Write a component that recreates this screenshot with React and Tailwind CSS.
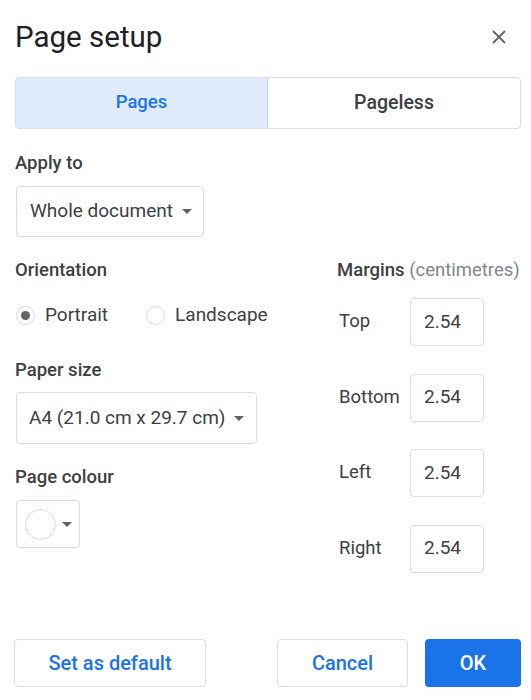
import React from "react";

const font = { fontFamily: "Roboto, 'Noto Sans', sans-serif" };

function Caret() {
	return (
		<svg width="10" height="5" viewBox="0 0 10 5" className="shrink-0">
			<path d="M0 0 L10 0 L5 5 Z" fill="#5f6368" />
		</svg>
	);
}

function Label({ children, className = "" }) {
	return (
		<div className={`text-[18.5px] leading-[20px] font-medium text-[#3c4043] ${className}`}>
			{children}
		</div>
	);
}

function Radio({ checked, label }) {
	return (
		<label className="flex items-center gap-[10px]">
			<span className="w-[19px] h-[19px] rounded-full border border-[#dadce0] flex items-center justify-center">
				{checked && <span className="w-[9px] h-[9px] rounded-full bg-[#5f6368]" />}
			</span>
			<span className="text-[19px] leading-[20px] text-[#3c4043]">{label}</span>
		</label>
	);
}

function MarginRow({ label }) {
	return (
		<div className="flex items-center">
			<span className="w-[72px] pl-[1px] text-[18.5px] text-[#3c4043]">{label}</span>
			<div className="w-[74px] h-[48px] border border-[#dadce0] rounded-[4px] flex items-center px-[13px] text-[19px] text-[#3c4043]">
				2.54
			</div>
		</div>
	);
}

export default function App() {
	const margins = ["Top", "Bottom", "Left", "Right"];

	return (
		<div style={font} className="w-[531px] h-[700px] bg-white flex flex-col pl-[15px] pr-[10px]">
			{/* Header */}
			<div className="flex items-center justify-between pt-[19px]">
				<h1 className="text-[29.5px] leading-[36px] text-[#202124]">Page setup</h1>
				<svg width="14" height="14" viewBox="0 0 14 14" className="mr-[15px]">
					<path d="M1 1 L13 13 M13 1 L1 13" stroke="#5f6368" strokeWidth="1.8" />
				</svg>
			</div>

			{/* Tabs */}
			<div className="mt-[22px] h-[52px] grid grid-cols-2 border border-[#dadce0] rounded-[4px] overflow-hidden">
				<div className="bg-[#e0ebfd] border-r border-[#c6d6f0] flex items-center justify-center text-[18.5px] font-medium text-[#1a73e8]">
					Pages
				</div>
				<div className="flex items-center justify-center text-[19.5px] font-medium text-[#3c4043]">
					Pageless
				</div>
			</div>

			<Label className="mt-[24px]">Apply to</Label>
			<div className="mt-[13px] ml-[1px] w-[188px] h-[51px] border border-[#dadce0] rounded-[4px] flex items-center gap-[9px] pl-[13px] whitespace-nowrap text-[19px] text-[#3c4043]">
				Whole document
				<Caret />
			</div>

			{/* Two columns */}
			<div className="mt-[23px] flex justify-between">
				<div className="flex flex-col">
					<Label>Orientation</Label>
					<div className="mt-[25px] ml-[1px] flex items-center gap-[38px]">
						<Radio checked label="Portrait" />
						<Radio label="Landscape" />
					</div>

					<Label className="mt-[35px]">Paper size</Label>
					<div className="mt-[12px] ml-[1px] w-[241px] h-[52px] border border-[#dadce0] rounded-[4px] flex items-center gap-[8px] pl-[12px] whitespace-nowrap text-[19px] text-[#3c4043]">
						A4 (21.0 cm x 29.7 cm)
						<Caret />
					</div>

					<Label className="mt-[23px]">Page colour</Label>
					<div className="mt-[13px] ml-[1px] w-[64px] h-[48px] border border-[#dadce0] rounded-[4px] flex items-center gap-[6px] pl-[8px]">
						<span className="w-[31px] h-[31px] rounded-full border border-[#dadce0] bg-white" />
						<Caret />
					</div>
				</div>

				<div className="flex flex-col w-[184px]">
					<div className="text-[18.5px] leading-[20px] text-[#80868b] whitespace-nowrap">
						<span className="font-medium text-[#3c4043]">Margins</span> (centimetres)
					</div>
					<div className="mt-[18px] flex flex-col gap-[27.5px] pl-[1px]">
						{margins.map((m) => (
							<MarginRow key={m} label={m} />
						))}
					</div>
				</div>
			</div>

			{/* Footer */}
			<div className="mt-auto pb-[13px] flex items-center -ml-[1px]">
				<button className="w-[192px] h-[48px] border border-[#dadce0] rounded-[4px] text-[20px] font-medium text-[#1a73e8]">
					Set as default
				</button>
				<div className="ml-auto flex gap-[17px]">
					<button className="w-[131px] h-[48px] border border-[#dadce0] rounded-[4px] text-[20px] font-medium text-[#1a73e8]">
						Cancel
					</button>
					<button className="w-[96px] h-[48px] rounded-[4px] bg-[#1a73e8] text-[20px] font-medium text-white">
						OK
					</button>
				</div>
			</div>
		</div>
	);
}
